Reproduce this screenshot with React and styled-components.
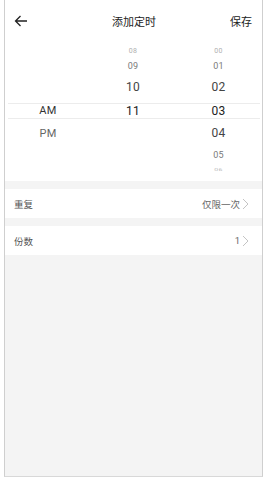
import React from 'react'
import styled, { createGlobalStyle } from 'styled-components'

const GlobalStyle = createGlobalStyle`
  html, body {
    margin: 0;
    padding: 0;
    background: #fff;
    font-family: Roboto, "Noto Sans CJK SC", sans-serif;
  }
`

const hours = [
  { v: '08', h: 14, size: 7, color: '#b0b0b0' },
  { v: '09', h: 16, size: 9, color: '#7a7a7a' },
  { v: '10', h: 26, size: 12, color: '#444' },
  { v: '11', h: 21, size: 12, color: '#222' },
  { v: '', h: 24 },
  { v: '', h: 19 },
  { v: '', h: 12 },
]

const minutes = [
  { v: '00', h: 14, size: 7, color: '#b0b0b0' },
  { v: '01', h: 16, size: 9, color: '#7a7a7a' },
  { v: '02', h: 26, size: 12, color: '#444' },
  { v: '03', h: 21, size: 12, color: '#222' },
  { v: '04', h: 24, size: 12, color: '#444' },
  { v: '05', h: 19, size: 9, color: '#7a7a7a' },
  { v: '06', h: 12, size: 7, color: '#b8b8b8', squash: true },
]

const ampm = [
  { v: '', h: 14 },
  { v: '', h: 16 },
  { v: '', h: 26 },
  { v: 'AM', h: 21, size: 11, color: '#333' },
  { v: 'PM', h: 24, size: 11, color: '#666' },
  { v: '', h: 19 },
  { v: '', h: 12 },
]

const Chevron = () => (
  <svg width="7" height="12" viewBox="0 0 7 12">
    <path d="M1 1 L6 6 L1 11" fill="none" stroke="#c4c4c4" strokeWidth="1" />
  </svg>
)

const BackArrow = () => (
  <svg width="14" height="12" viewBox="0 0 14 12">
    <path d="M13 6 H1.5 M6.5 1 L1.5 6 L6.5 11" fill="none" stroke="#222" strokeWidth="1.3" />
  </svg>
)

export default function App() {
  return (
    <>
      <GlobalStyle />
      <Frame>
        <Header>
          <BackButton><BackArrow /></BackButton>
          <Title>添加定时</Title>
          <Save>保存</Save>
        </Header>
        <Picker>
          <SelectBand />
          <Column>
            {ampm.map((it, i) => (
              <Slot key={i} $h={it.h} $size={it.size} $color={it.color}>{it.v}</Slot>
            ))}
          </Column>
          <Column>
            {hours.map((it, i) => (
              <Slot key={i} $h={it.h} $size={it.size} $color={it.color}>{it.v}</Slot>
            ))}
          </Column>
          <Column>
            {minutes.map((it, i) => (
              <Slot key={i} $h={it.h} $size={it.size} $color={it.color} $squash={it.squash}>{it.v}</Slot>
            ))}
          </Column>
        </Picker>
        <Gap />
        <Row>
          <Label>重复</Label>
          <Value>仅限一次<Chevron /></Value>
        </Row>
        <Gap />
        <Row>
          <Label>份数</Label>
          <Value>1<Chevron /></Value>
        </Row>
      </Frame>
    </>
  )
}

const Frame = styled.div`
  margin: 0 4px;
  width: 257px;
  height: 476px;
  box-sizing: content-box;
  border-left: 1px solid #cfcfcf;
  border-right: 1px solid #cfcfcf;
  border-bottom: 1px solid #d8d8d8;
  background: #f4f4f4;
  display: flex;
  flex-direction: column;
`

const Header = styled.div`
  height: 42px;
  background: #fff;
  display: flex;
  align-items: center;
  justify-content: space-between;
  padding: 0 10px 0 9px;
`

const BackButton = styled.div`
  width: 40px;
  display: flex;
  align-items: center;
`

const Title = styled.div`
  font-size: 11px;
  color: #222;
  margin-left: 2px;
`

const Save = styled.div`
  width: 40px;
  text-align: right;
  font-size: 11px;
  color: #222;
`

const Picker = styled.div`
  position: relative;
  background: #fff;
  display: grid;
  grid-template-columns: 86px 84px 87px;
  padding: 2px 0 5px;
`

const SelectBand = styled.div`
  position: absolute;
  left: 3px;
  right: 2px;
  top: 61px;
  height: 14px;
  border-top: 1px solid #ececec;
  border-bottom: 1px solid #ececec;
`

const Column = styled.div`
  display: flex;
  flex-direction: column;
  align-items: center;
`

const Slot = styled.div`
  height: ${p => p.$h}px;
  display: flex;
  align-items: center;
  justify-content: center;
  font-size: ${p => p.$size || 12}px;
  color: ${p => p.$color || '#333'};
  transform: ${p => (p.$squash ? 'scaleY(0.6)' : 'none')};
  letter-spacing: 0.3px;
`

const Gap = styled.div`
  height: 8px;
`

const Row = styled.div`
  height: 29px;
  background: #fff;
  display: flex;
  align-items: center;
  justify-content: space-between;
  padding: 0 13px 0 9px;
`

const Label = styled.div`
  font-size: 9.5px;
  color: #555;
`

const Value = styled.div`
  display: flex;
  align-items: center;
  gap: 2px;
  font-size: 9.5px;
  color: #666;
`
